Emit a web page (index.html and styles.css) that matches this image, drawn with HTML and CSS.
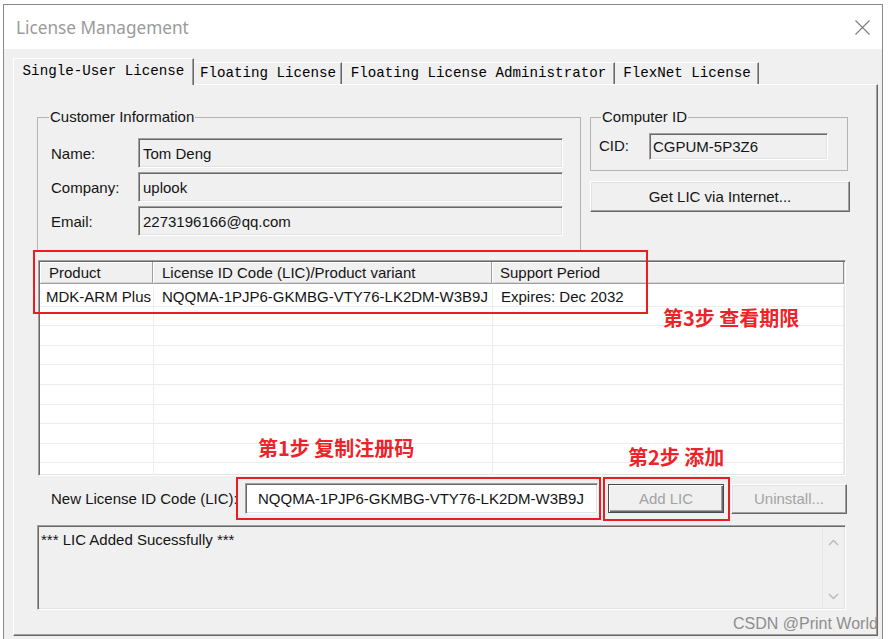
FILE: index.html
```html
<!DOCTYPE html>
<html>
<head>
<meta charset="utf-8">
<title>License Management</title>
<link rel="stylesheet" href="styles.css">
</head>
<body>
<div class="window">
  <div class="titlebar">
    <span class="title">License Management</span>
    <svg class="close" width="15" height="15" viewBox="0 0 15 15"><path d="M0.5 0.5L14.5 14.5M14.5 0.5L0.5 14.5" stroke="#7c7c7c" stroke-width="1.1" fill="none"/></svg>
  </div>
  <div class="client">
    <div class="tabs">
      <div class="tab active t1">Single-User License</div>
      <div class="tab t2">Floating License</div>
      <div class="tab t3">Floating License Administrator</div>
      <div class="tab t4">FlexNet License</div>
    </div>
    <div class="panel">
      <div class="toprow">
        <fieldset class="group customer">
          <legend>Customer Information</legend>
          <div class="form">
            <span class="lbl">Name:</span><div class="field ro">Tom Deng</div>
            <span class="lbl">Company:</span><div class="field ro">uplook</div>
            <span class="lbl">Email:</span><div class="field ro">2273196166@qq.com</div>
          </div>
        </fieldset>
        <div class="rightcol">
          <fieldset class="group cid">
            <legend>Computer ID</legend>
            <div class="cidrow">
              <span class="lbl cidlbl">CID:</span><div class="field ro cidfield">CGPUM-5P3Z6</div>
            </div>
          </fieldset>
          <div class="btn getlic">Get LIC via Internet...</div>
        </div>
      </div>

      <div class="list">
        <div class="lhead">
          <div class="hcell c1">Product</div>
          <div class="hcell c2">License ID Code (LIC)/Product variant</div>
          <div class="hcell c3">Support Period</div>
        </div>
        <div class="lbody">
          <div class="lrow"><div class="cell c1">MDK-ARM Plus</div><div class="cell c2">NQQMA-1PJP6-GKMBG-VTY76-LK2DM-W3B9J</div><div class="cell c3">Expires: Dec 2032</div></div>
          <div class="lrow"><div class="cell"></div><div class="cell"></div><div class="cell"></div></div>
          <div class="lrow"><div class="cell"></div><div class="cell"></div><div class="cell"></div></div>
          <div class="lrow"><div class="cell"></div><div class="cell"></div><div class="cell"></div></div>
          <div class="lrow"><div class="cell"></div><div class="cell"></div><div class="cell"></div></div>
          <div class="lrow"><div class="cell"></div><div class="cell"></div><div class="cell"></div></div>
          <div class="lrow"><div class="cell"></div><div class="cell"></div><div class="cell"></div></div>
          <div class="lrow"><div class="cell"></div><div class="cell"></div><div class="cell"></div></div>
          <div class="lrow"><div class="cell"></div><div class="cell"></div><div class="cell"></div></div>
          <div class="lrow"><div class="cell"></div><div class="cell"></div><div class="cell"></div></div>
        </div>
      </div>

      <div class="licrow">
        <span class="lbl newlbl">New License ID Code (LIC):</span>
        <div class="field licinput">NQQMA-1PJP6-GKMBG-VTY76-LK2DM-W3B9J</div>
        <div class="btn default disabled addlic">Add LIC</div>
        <div class="btn disabled uninstall">Uninstall...</div>
      </div>

      <div class="output">
        <div class="outtext">*** LIC Added Sucessfully ***</div>
        <div class="scroll">
          <svg width="11" height="7" viewBox="0 0 11 7"><path d="M1 6L5.5 1.5L10 6" stroke="#b9b9b9" stroke-width="1.4" fill="none"/></svg>
          <svg width="11" height="7" viewBox="0 0 11 7"><path d="M1 1L5.5 5.5L10 1" stroke="#b9b9b9" stroke-width="1.4" fill="none"/></svg>
        </div>
      </div>
    </div>
  </div>

  <div class="mark box1"></div>
  <div class="mark box2"></div>
  <div class="mark box3"></div>
  <div class="note n3">第3步 查看期限</div>
  <div class="note n1">第1步 复制注册码</div>
  <div class="note n2">第2步 添加</div>
  <div class="watermark">CSDN @Print World</div>
</div>
</body>
</html>
```

FILE: styles.css
```css
* { box-sizing: border-box; }
html, body { margin: 0; padding: 0; background: #fff; }
body {
  font-family: "Liberation Sans", Arial, sans-serif;
  font-size: 15px;
  color: #141414;
}
.window {
  position: relative;
  margin: 4px 0 0 3px;
  width: 880px;
  height: 650px;
  border: 1px solid #8a8a8a;
  border-bottom: none;
  background: #f0f0f0;
  overflow: hidden;
}
.titlebar {
  height: 44px;
  background: #fff;
  display: flex;
  align-items: center;
  justify-content: space-between;
  padding: 0 12px 0 12px;
}
.title {
  font-family: "Noto Sans", "Open Sans", sans-serif;
  font-size: 17.2px;
  color: #9a9a9a;
  padding-top: 1px;
}
.close { margin-top: 1px; }

.client { padding: 9px 4px 0 9px; }

.tabs {
  display: flex;
  align-items: flex-end;
  height: 26px;
  position: relative;
  z-index: 2;
}
.tab {
  height: 22px;
  line-height: 21px;
  text-align: center;
  font-family: "Liberation Mono", "Courier New", monospace;
  font-size: 14.2px;
  color: #000;
  border-top: 1px solid #fff;
  border-left: 1px solid #fff;
  border-right: 1px solid #696969;
  box-shadow: inset -1px 0 #a0a0a0;
  white-space: nowrap;
}
.tab.active {
  height: 27px;
  line-height: 25px;
  margin-bottom: -1px;
  background: #f0f0f0;
}
.t1 { width: 181px; }
.t2 { width: 148px; border-left-color: transparent; }
.t3 { width: 273px; border-left-color: transparent; }
.t4 { width: 144px; border-left-color: transparent; }

.panel {
  width: 865px;
  height: 552px;
  border: 1px solid;
  border-color: #fff #696969 #696969 #fff;
  box-shadow: inset -1px -1px #a0a0a0;
  padding: 24px 0 0 23px;
}

.toprow {
  display: flex;
  gap: 9px;
  align-items: flex-start;
}
.group {
  margin: 0;
  min-width: 0;
  border: 1px solid #b4b4b4;
}
.group legend {
  line-height: 16px;
  padding: 0 1px;
}
.customer {
  width: 544px;
  height: 142px;
  margin-bottom: -3px;
  padding: 13px 17px 0 13px;
}
.customer legend { margin-left: -2px; }
.form {
  display: grid;
  grid-template-columns: 87px 425px;
  grid-auto-rows: 30px;
  row-gap: 4px;
  align-items: center;
}
.field {
  height: 30px;
  display: flex;
  align-items: center;
  padding-left: 4px;
  border: 1px solid;
  border-color: #a0a0a0 #fff #fff #a0a0a0;
  box-shadow: inset 1px 1px #696969, inset -1px -1px #e3e3e3;
  white-space: nowrap;
}
.field.ro { background: #f0f0f0; }

.rightcol {
  width: 260px;
  display: flex;
  flex-direction: column;
}
.cid {
  width: 258px;
  height: 62px;
  padding: 8px 0 0 8px;
}
.cid legend { margin-left: 2px; }
.cidrow {
  display: grid;
  grid-template-columns: 50px 179px;
  align-items: center;
}
.cidlbl { padding-bottom: 3px; }
.cidfield { height: 27px; padding-left: 3px; }

.btn {
  display: flex;
  align-items: center;
  justify-content: center;
  background: #f0f0f0;
  border: 1px solid;
  border-color: #fff #696969 #696969 #fff;
  box-shadow: inset -1px -1px #a0a0a0, inset 1px 1px #e3e3e3;
  white-space: nowrap;
}
.getlic {
  margin-top: 10px;
  width: 260px;
  height: 31px;
}
.btn.disabled { color: #a3a3a3; }
.btn.default {
  border: 1px solid #4a4a4a;
  box-shadow: inset 1px 1px #fff, inset -1px -1px #696969, inset -2px -2px #a0a0a0;
}

.list {
  margin: 12px 0 0 1px;
  width: 808px;
  height: 216px;
  background: #fff;
  border: 1px solid;
  border-color: #a0a0a0 #fff #fff #a0a0a0;
  box-shadow: inset 1px 1px #696969, inset -1px -1px #e3e3e3;
  padding: 1px;
  overflow: hidden;
}
.lhead {
  display: grid;
  grid-template-columns: 113px 339px 1fr;
  height: 22px;
  background: #f0f0f0;
}
.hcell {
  display: flex;
  align-items: center;
  border-right: 1px solid #a0a0a0;
  border-bottom: 1px solid #a0a0a0;
  box-shadow: inset 1px 1px #fff, inset 0 -1px #d6d6d6;
  white-space: nowrap;
}
.hcell.c1 { padding-left: 9px; }
.hcell.c2 { padding-left: 9px; }
.hcell.c3 { padding-left: 8px; border-right-color: #8a8a8a; }
.lbody { padding-top: 3px; }
.lrow {
  display: grid;
  grid-template-columns: 114px 339px 1fr;
  height: 19.6px;
}
.cell {
  display: flex;
  align-items: center;
  border-right: 1px solid #ededed;
  border-bottom: 1px solid #ededed;
  white-space: nowrap;
  overflow: hidden;
}
.cell.c1 { padding-left: 6px; }
.cell.c2 { padding-left: 8px; }
.cell.c3 { padding-left: 8px; }

.licrow {
  margin-top: 7px;
  display: flex;
  align-items: center;
  height: 31px;
}
.newlbl {
  width: 208px;
  padding-left: 14px;
  white-space: nowrap;
}
.licinput {
  width: 353px;
  height: 31px;
  background: #fff;
  padding-left: 12px;
}
.addlic {
  margin-left: 10px;
  width: 116px;
  height: 29px;
}
.uninstall {
  margin-left: 7px;
  width: 116px;
  height: 30px;
}

.output {
  margin-top: 11px;
  width: 809px;
  height: 85px;
  display: flex;
  border: 1px solid;
  border-color: #a0a0a0 #fff #fff #a0a0a0;
  box-shadow: inset 1px 1px #696969, inset -1px -1px #e3e3e3;
  padding: 1px;
  background: #f0f0f0;
}
.outtext {
  flex: 1;
  padding: 4px 0 0 2px;
  line-height: 18px;
  white-space: nowrap;
}
.scroll {
  width: 22px;
  border-left: 1px solid #e6e6e6;
  display: flex;
  flex-direction: column;
  align-items: center;
  justify-content: space-between;
  padding: 12px 0 8px 0;
}

.mark {
  position: absolute;
  border: 2px solid #ec1c24;
}
.box1 { left: 29px; top: 245px; width: 615px; height: 64px; }
.box2 { left: 232px; top: 472px; width: 365px; height: 43px; }
.box3 { left: 599px; top: 472px; width: 127px; height: 44px; }

.note {
  position: absolute;
  font-family: "Noto Sans CJK SC", "Liberation Sans", sans-serif;
  font-weight: 700;
  font-size: 20px;
  line-height: 20px;
  color: #ee2229;
  white-space: nowrap;
}
.n3 { left: 659px; top: 303px; }
.n1 { left: 254px; top: 433px; }
.n2 { left: 624px; top: 442px; }

.watermark {
  position: absolute;
  left: 729px;
  top: 611px;
  font-family: "Liberation Sans", Arial, sans-serif;
  font-size: 16px;
  line-height: 16px;
  color: #8e8e8e;
  white-space: nowrap;
}
```
